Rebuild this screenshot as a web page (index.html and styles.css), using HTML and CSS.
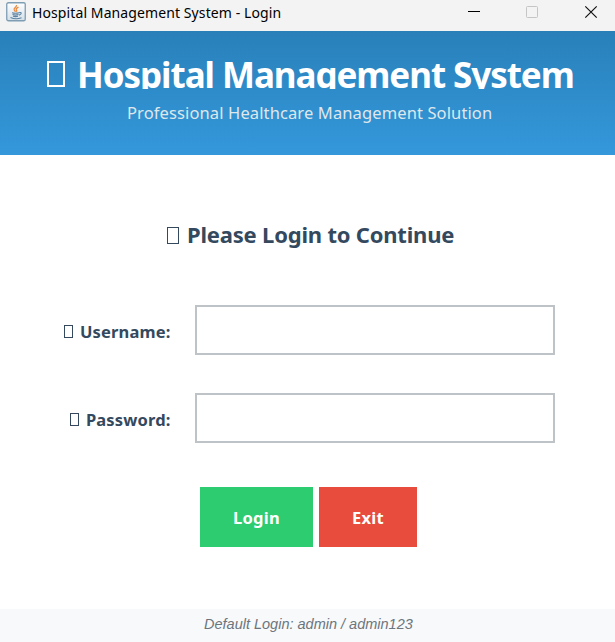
FILE: index.html
```html
<!DOCTYPE html>
<html lang="en">
<head>
<meta charset="utf-8">
<title>Hospital Management System - Login</title>
<link rel="stylesheet" href="styles.css">
</head>
<body>
<div class="window">
  <div class="titlebar">
    <svg class="app-icon" width="20" height="20" viewBox="0 0 20 20">
      <defs><linearGradient id="tile" x1="0" y1="0" x2="0" y2="1"><stop offset="0" stop-color="#fff"/><stop offset="1" stop-color="#d3dfe8"/></linearGradient></defs>
      <rect x=".75" y=".75" width="18.5" height="18" rx="1.6" fill="url(#tile)" stroke="#7f9db3" stroke-width="1.3"/>
      <path d="M10.5 3C11 5 7.2 6 8.2 7.8L9.5 9.8M12.5 5.2C10.5 6.2 9.6 7 10.5 8.2Q11 9 10.3 9.8" fill="none" stroke="#ec8a3c" stroke-width="1.3"/>
      <path d="M6 10.7Q9.5 11.7 13 10.7M6.5 12.6Q9.5 13.6 12.5 12.6M7 14.3Q9.5 15 12 14.3M13 10.7Q16.3 10 14.7 12.2L13 13.2M4.5 15.5Q10 18 15.5 15.7" fill="none" stroke="#5d83a1" stroke-width="1.1"/>
    </svg>
    <span class="caption">Hospital Management System - Login</span>
    <svg class="controls" width="132" height="18" viewBox="0 0 132 18">
      <path d="M0 8.5H12" stroke="#000"/>
      <rect x="58.5" y="3.5" width="11" height="11" rx="1" fill="none" stroke="#c5c5c5"/>
      <path d="M117.3 3.3L128.7 14.7M128.7 3.3L117.3 14.7" stroke="#111" stroke-width="1.2"/>
    </svg>
  </div>
  <header class="banner">
    <h1 class="title"><i class="glyph"></i><span>Hospital Management System</span></h1>
    <p class="subtitle">Professional Healthcare Management Solution</p>
  </header>
  <main class="content">
    <h2 class="prompt"><i class="glyph"></i><span>Please Login to Continue</span></h2>
    <form class="form">
      <div class="field">
        <label class="label" for="user"><i class="glyph"></i><span>Username:</span></label>
        <input class="input" id="user" type="text">
      </div>
      <div class="field">
        <label class="label" for="pass"><i class="glyph"></i><span>Password:</span></label>
        <input class="input" id="pass" type="password">
      </div>
      <div class="actions">
        <button class="button login" type="button">Login</button>
        <button class="button exit" type="button">Exit</button>
      </div>
    </form>
  </main>
  <footer class="footer">Default Login: admin / admin123</footer>
</div>
</body>
</html>
```
FILE: styles.css
```css
* { box-sizing: border-box; margin: 0; padding: 0; }
body { background: #fff; font-family: "Noto Sans", "Open Sans", sans-serif; }
.window { width: 615px; height: 642px; display: flex; flex-direction: column; overflow: hidden; white-space: nowrap; }
.titlebar { height: 31px; flex: none; background: #f3f3f3; display: flex; align-items: flex-start; padding: 2px 15px 0 6px; }
.app-icon { flex: none; }
.caption { margin-left: 6px; font-size: 14px; line-height: 22px; letter-spacing: .1px; color: #000; }
.controls { margin: 1px 0 0 auto; flex: none; }
.banner { height: 124px; flex: none; background: linear-gradient(#2980b9, #3498db); padding-top: 25px; }
.glyph { display: block; flex: none; border: 1px solid currentColor; }
.title { display: flex; height: 33px; overflow: hidden; padding-left: 47px; color: #fff; font-size: 35px; line-height: 38px; font-weight: 700; letter-spacing: -1.06px; }
.title .glyph { width: 18px; height: 26px; margin: 5px 12px 0 0; border-width: 2px; }
.subtitle { margin-top: 12px; padding-left: 127px; font-size: 16.5px; line-height: 24px; letter-spacing: .12px; color: #dfe7eb; }
.content { height: 454px; flex: none; padding-top: 64px; color: #34495e; }
.prompt { display: flex; height: 30px; padding-left: 167px; font-size: 22px; line-height: 30px; font-weight: 700; letter-spacing: -.2px; }
.prompt .glyph { width: 12px; height: 17px; margin: 8px 8px 0 0; }
.form { padding-top: 56px; }
.field { display: flex; height: 50px; margin-bottom: 38px; }
.label { width: 195px; display: flex; justify-content: flex-end; align-items: center; padding: 3px 24.5px 0 0; font-size: 16.5px; font-weight: 700; letter-spacing: .15px; }
.label .glyph { width: 9px; height: 13px; margin-right: 7px; }
.input { width: 360px; height: 50px; border: 2px solid #bdc3c7; background: #fff; padding: 0 12px; font: inherit; outline: 0; }
.actions { display: flex; gap: 6px; padding: 6px 0 0 200px; }
.button { height: 60px; border: 0; color: #fff; font-family: inherit; font-size: 16.5px; font-weight: 700; letter-spacing: .3px; }
.login { width: 113px; background: #2ecc71; }
.exit { width: 98px; background: #e74c3c; }
.footer { height: 33px; flex: none; background: #f8f9fa; padding-left: 204px; font: italic 14.5px/31px "Liberation Sans", Arial, sans-serif; color: #6c757d; }
```
